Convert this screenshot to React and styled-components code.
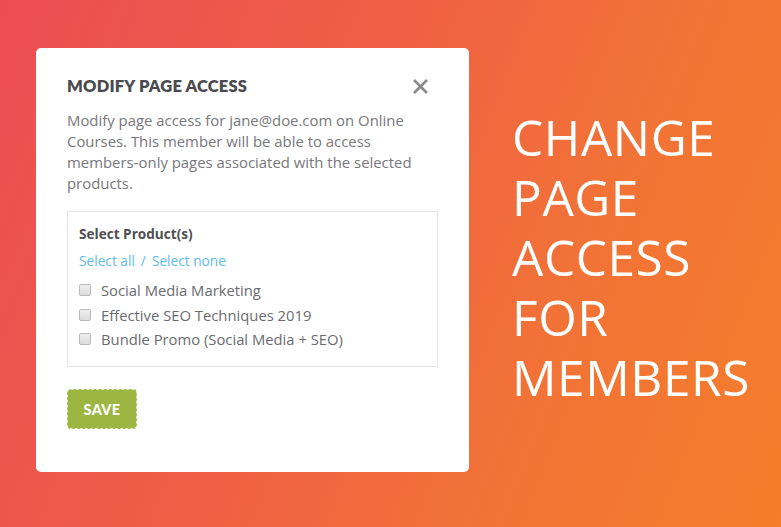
import React from 'react';
import styled, { createGlobalStyle } from 'styled-components';

const GlobalStyle = createGlobalStyle`
  html, body {
    margin: 0;
    padding: 0;
  }
  body {
    font-family: Lato, "Open Sans", sans-serif;
  }
`;

const Page = styled.div`
  width: 781px;
  height: 527px;
  box-sizing: border-box;
  padding: 48px 0 0 36px;
  display: flex;
  align-items: flex-start;
  background: linear-gradient(112deg, #ec4d53 0%, #ef5f45 40%, #f27336 70%, #f47e2b 100%);
  overflow: hidden;
`;

const Card = styled.div`
  width: 433px;
  height: 424px;
  box-sizing: border-box;
  background: #fff;
  border-radius: 5px;
  padding: 27px 31px 0 31px;
  display: flex;
  flex-direction: column;
`;

const Header = styled.div`
  display: flex;
  justify-content: space-between;
  align-items: center;
  height: 22px;
`;

const Title = styled.h2`
  margin: 0;
  font-family: Lato, sans-serif;
  font-weight: 800;
  font-size: 16.5px;
  letter-spacing: 0.2px;
  color: #4a4a4f;
  text-transform: uppercase;
`;

const CloseButton = styled.button`
  border: 0;
  background: none;
  padding: 0;
  margin-right: 9px;
  width: 17px;
  height: 17px;
  display: flex;
  cursor: pointer;
`;

const Description = styled.p`
  margin: 13px 0 0 0;
  font-family: "Open Sans", sans-serif;
  font-size: 14.9px;
  line-height: 21px;
  color: #77777c;
`;

const ProductBox = styled.div`
  margin-top: 17px;
  border: 1px solid #e6e6e6;
  height: 156px;
  box-sizing: border-box;
  padding: 12px 11px;
  display: flex;
  flex-direction: column;
`;

const BoxTitle = styled.div`
  font-family: "Open Sans", sans-serif;
  font-weight: 700;
  font-size: 13.6px;
  color: #4f4f52;
  line-height: 20px;
`;

const SelectLinks = styled.div`
  margin-top: 7px;
  font-family: "Open Sans", sans-serif;
  font-size: 13.7px;
  line-height: 20px;
  color: #62bbe8;
  display: flex;
  gap: 6px;
`;

const Link = styled.a`
  color: inherit;
  text-decoration: none;
  cursor: pointer;
`;

const Options = styled.div`
  margin-top: 9px;
  display: flex;
  flex-direction: column;
  gap: 4.5px;
`;

const Option = styled.label`
  display: flex;
  align-items: center;
  gap: 10px;
  font-family: "Open Sans", sans-serif;
  font-size: 14.8px;
  line-height: 20px;
  color: #6b6b70;
`;

const Box = styled.span`
  width: 10px;
  height: 10px;
  border: 1px solid #b9b9b9;
  border-radius: 2px;
  background: linear-gradient(#efefef, #dcdcdc);
  flex-shrink: 0;
`;

const SaveButton = styled.button`
  margin-top: 22px;
  align-self: flex-start;
  width: 70px;
  height: 40px;
  border: 1px dashed #dfe5cb;
  border-radius: 4px;
  background: #9db641;
  color: #fff;
  font-family: Lato, sans-serif;
  font-weight: 900;
  font-size: 14.5px;
  letter-spacing: 0.3px;
  cursor: pointer;
`;

const Headline = styled.h1`
  margin: 59px 0 0 43px;
  font-family: "Open Sans", sans-serif;
  font-weight: 400;
  font-size: 49.5px;
  color: #fff;
  text-transform: uppercase;
  letter-spacing: 0.6px;
  display: flex;
  flex-direction: column;
`;

const HeadlineLine = styled.span`
  display: block;
  height: 60px;
  line-height: 60px;
`;

const products = [
  'Social Media Marketing',
  'Effective SEO Techniques 2019',
  'Bundle Promo (Social Media + SEO)',
];

const headline = ['Change', 'Page', 'Access', 'For', 'Members'];

const CloseIcon = () => (
  <svg width="17" height="17" viewBox="0 0 17 17">
    <path d="M2 2L15 15M15 2L2 15" stroke="#8a8a8e" strokeWidth="2.6" strokeLinecap="butt" />
  </svg>
);

const App = () => {
  return (
    <>
      <GlobalStyle />
      <Page>
        <Card>
          <Header>
            <Title>Modify Page Access</Title>
            <CloseButton aria-label="Close">
              <CloseIcon />
            </CloseButton>
          </Header>
          <Description>
            Modify page access for jane@doe.com on Online Courses. This member will be able to access
            members&#8209;only pages associated with the selected products.
          </Description>
          <ProductBox>
            <BoxTitle>Select Product(s)</BoxTitle>
            <SelectLinks>
              <Link>Select all</Link>
              <span>/</span>
              <Link>Select none</Link>
            </SelectLinks>
            <Options>
              {products.map((name) => (
                <Option key={name}>
                  <Box />
                  {name}
                </Option>
              ))}
            </Options>
          </ProductBox>
          <SaveButton>SAVE</SaveButton>
        </Card>
        <Headline>
          {headline.map((word) => (
            <HeadlineLine key={word}>{word}</HeadlineLine>
          ))}
        </Headline>
      </Page>
    </>
  );
};

export default App;
